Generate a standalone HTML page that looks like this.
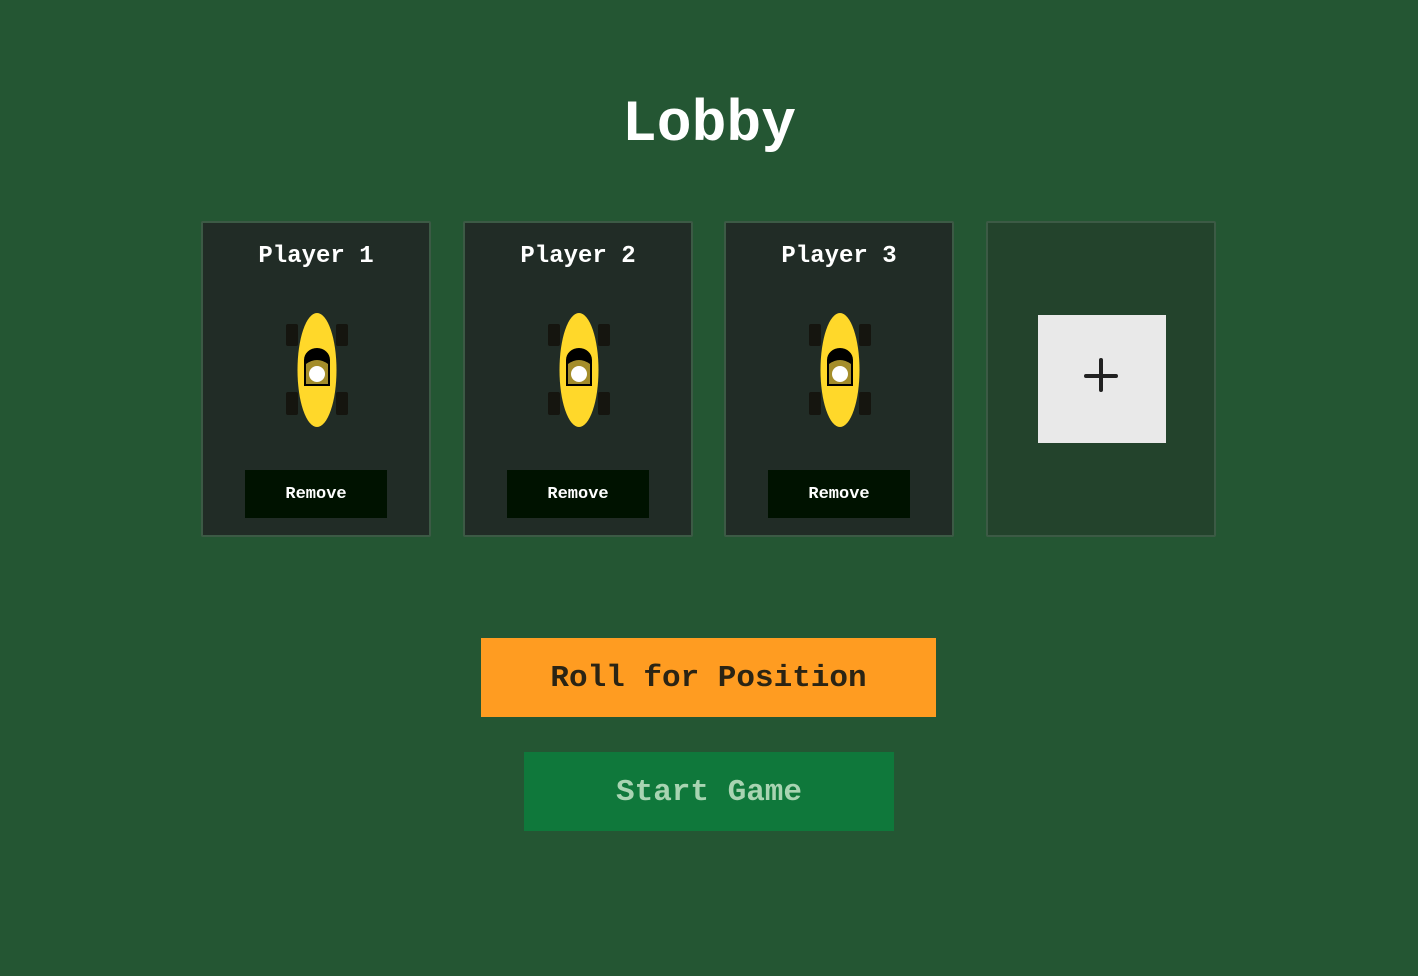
<!DOCTYPE html>
<html><head><style>
body{margin:0;width:1418px;height:976px;background:#245633;font-family:"Liberation Mono",monospace;font-weight:bold;position:relative;overflow:hidden}
.a{position:absolute}
h1{position:absolute;left:0;width:1418px;top:86px;margin:0;text-align:center;color:#fff;font-size:58px;line-height:80px}
.card{position:absolute;top:221px;width:226px;height:312px;background:#212c26;border:2px solid #3c5a45;border-radius:2px}
.card .t{position:absolute;top:20px;width:100%;text-align:center;color:#fff;font-size:24px}
.card .rm{position:absolute;left:42px;top:247px;width:142px;height:48px;background:#001200;color:#fff;font-size:17px;line-height:50px;text-align:center}
.car{position:absolute;left:81px;top:89px}
.btn{position:absolute;text-align:center;font-size:31px}
</style></head><body>
<h1>Lobby</h1>
<div class="card" style="left:201px"><div class="t">Player 1</div>
<svg class="car" width="66" height="118" viewBox="0 0 66 118"><rect x="2" y="12" width="12" height="22" rx="2" fill="#15150f"/><rect x="52" y="12" width="12" height="22" rx="2" fill="#15150f"/><rect x="2" y="80" width="12" height="23" rx="2" fill="#15150f"/><rect x="52" y="80" width="12" height="23" rx="2" fill="#15150f"/><ellipse cx="33" cy="58" rx="19.5" ry="57" fill="#ffd82a"/><path d="M20 74V48a13 12 0 0 1 26 0v26z" fill="#000"/><path d="M22 72V52q11-8 22 0v20z" fill="#a48d2a"/><circle cx="33" cy="62" r="8" fill="#fff"/></svg>
<div class="rm">Remove</div></div>
<div class="card" style="left:463px"><div class="t">Player 2</div>
<svg class="car" width="66" height="118" viewBox="0 0 66 118"><rect x="2" y="12" width="12" height="22" rx="2" fill="#15150f"/><rect x="52" y="12" width="12" height="22" rx="2" fill="#15150f"/><rect x="2" y="80" width="12" height="23" rx="2" fill="#15150f"/><rect x="52" y="80" width="12" height="23" rx="2" fill="#15150f"/><ellipse cx="33" cy="58" rx="19.5" ry="57" fill="#ffd82a"/><path d="M20 74V48a13 12 0 0 1 26 0v26z" fill="#000"/><path d="M22 72V52q11-8 22 0v20z" fill="#a48d2a"/><circle cx="33" cy="62" r="8" fill="#fff"/></svg>
<div class="rm">Remove</div></div>
<div class="card" style="left:724px"><div class="t">Player 3</div>
<svg class="car" width="66" height="118" viewBox="0 0 66 118"><rect x="2" y="12" width="12" height="22" rx="2" fill="#15150f"/><rect x="52" y="12" width="12" height="22" rx="2" fill="#15150f"/><rect x="2" y="80" width="12" height="23" rx="2" fill="#15150f"/><rect x="52" y="80" width="12" height="23" rx="2" fill="#15150f"/><ellipse cx="33" cy="58" rx="19.5" ry="57" fill="#ffd82a"/><path d="M20 74V48a13 12 0 0 1 26 0v26z" fill="#000"/><path d="M22 72V52q11-8 22 0v20z" fill="#a48d2a"/><circle cx="33" cy="62" r="8" fill="#fff"/></svg>
<div class="rm">Remove</div></div>
<div class="card" style="left:986px;background:#23432c"></div>
<div class="a" style="left:1038px;top:315px;width:128px;height:128px;background:#e9e9e9">
<svg width="128" height="128"><path d="M63 45v30M48 61h30" stroke="#222" stroke-width="4" stroke-linecap="round"/></svg></div>
<div class="btn" style="left:481px;top:638px;width:455px;height:79px;line-height:81px;background:#ff9c21;color:#2b2414">Roll for Position</div>
<div class="btn" style="left:524px;top:752px;width:370px;height:79px;line-height:81px;background:#0f783b;color:#a8d4b2">Start Game</div>
</body></html>
